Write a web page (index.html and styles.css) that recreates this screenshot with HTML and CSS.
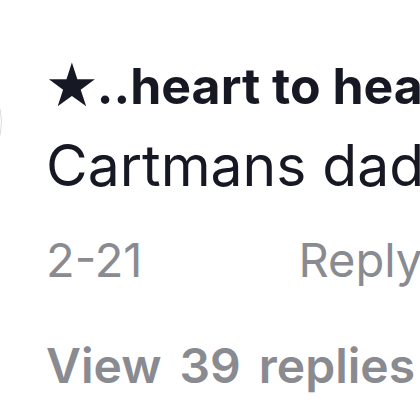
FILE: index.html
```html
<!DOCTYPE html>
<html lang="en">
<head>
<meta charset="utf-8">
<title>Comment</title>
<link rel="stylesheet" href="styles.css">
</head>
<body>
<div class="comment">
  <div class="avatar"></div>
  <div class="content">
    <p class="name"><span class="star">★</span>..heart to heart</p>
    <p class="text">Cartmans dad is Cartman</p>
    <div class="meta">
      <span class="date">2-21</span>
      <span class="reply">Reply</span>
    </div>
    <p class="more">View 39 replies</p>
  </div>
</div>
</body>
</html>
```
FILE: styles.css
```css
html, body {
  margin: 0;
  padding: 0;
  background: #ffffff;
}
body {
  font-family: Inter, "Noto Sans", sans-serif;
  color: #161823;
  overflow: hidden;
  width: 420px;
  height: 420px;
}
.comment {
  display: flex;
  align-items: flex-start;
  margin-left: -118px;
}
.avatar {
  flex: none;
  width: 120px;
  height: 120px;
  box-sizing: border-box;
  border-radius: 50%;
  border: 1.5px solid #dcdcde;
  background: #ffffff;
  margin-top: 62px;
  margin-right: 44px;
}
.content {
  flex: 1;
  min-width: 0;
  white-space: nowrap;
  overflow: hidden;
  padding-top: 55px;
}
.content p {
  margin: 0;
}
.name {
  font-size: 50px;
  line-height: 60px;
  font-weight: 700;
}
.star {
  font-family: "DejaVu Sans", sans-serif;
  font-size: 60px;
  line-height: 60px;
  vertical-align: -2px;
  margin-left: -1px;
  margin-right: -2px;
}
.text {
  font-size: 57px;
  line-height: 72px;
  margin-top: 14px !important;
}
.meta {
  display: flex;
  gap: 156px;
  font-size: 47px;
  line-height: 60px;
  color: #8a8b91;
  margin-top: 28px;
}
.more {
  font-size: 48px;
  line-height: 60px;
  font-weight: 600;
  word-spacing: 6px;
  color: #8a8b91;
  margin-top: 46px !important;
}
```
